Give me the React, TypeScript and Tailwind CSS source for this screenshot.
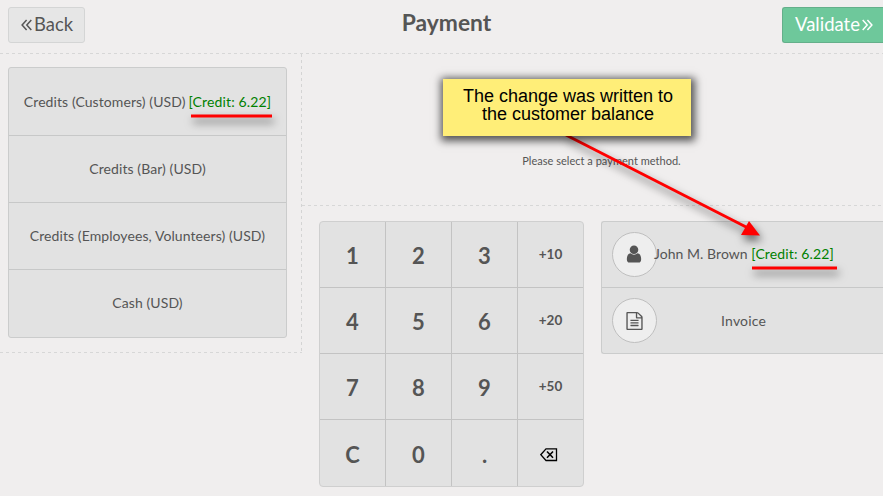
import React from "react";

const paymentMethods = [
  { name: "Credits (Customers) (USD)", credit: "[Credit: 6.22]" },
  { name: "Credits (Bar) (USD)" },
  { name: "Credits (Employees, Volunteers) (USD)" },
  { name: "Cash (USD)" },
];

const keys = ["1", "2", "3", "+10", "4", "5", "6", "+20", "7", "8", "9", "+50", "C", "0", ".", "back"];

function DoubleAngle({ right = false }: { right?: boolean }) {
  return (
    <svg width="11" height="12" viewBox="0 0 11 12" fill="none" stroke="currentColor" strokeWidth="1.5" className={right ? "rotate-180" : ""}>
      <path d="M5.6 .9 1.1 6l4.5 5.1M10.3 .9 5.8 6l4.5 5.1" />
    </svg>
  );
}

function UserIcon() {
  return (
    <svg width="20" height="20" viewBox="0 0 1792 1792" fill="currentColor" className="-mt-0.5 mr-px">
      <path d="M1536 1399q0 109-62.5 187t-150.5 78h-854q-88 0-150.5-78t-62.5-187q0-85 8.5-160.5t31.5-152 58.5-131 94-89 134.5-34.5q131 128 313 128t313-128q76 0 134.5 34.5t94 89 58.5 131 31.5 152 8.5 160.5zm-256-887q0 159-112.5 271.5t-271.5 112.5-271.5-112.5-112.5-271.5 112.5-271.5 271.5-112.5 271.5 112.5 112.5 271.5z" />
    </svg>
  );
}

function InvoiceIcon() {
  return (
    <svg width="19" height="18" viewBox="0 0 1792 1792" preserveAspectRatio="none" fill="currentColor" className="mr-px">
      <path d="M1596 380q28 28 48 76t20 88v1152q0 40-28 68t-68 28h-1344q-40 0-68-28t-28-68v-1600q0-40 28-68t68-28h896q40 0 88 20t76 48zm-444-244v376h376q-10-29-22-41l-313-313q-12-12-41-22zm384 1528v-1024h-416q-40 0-68-28t-28-68v-416h-768v1536h1280zm-1024-864q0-14 9-23t23-9h704q14 0 23 9t9 23v64q0 14-9 23t-23 9h-704q-14 0-23-9t-9-23v-64zm736 224q14 0 23 9t9 23v64q0 14-9 23t-23 9h-704q-14 0-23-9t-9-23v-64q0-14 9-23t23-9h704zm0 256q14 0 23 9t9 23v64q0 14-9 23t-23 9h-704q-14 0-23-9t-9-23v-64q0-14 9-23t23-9h704z" />
    </svg>
  );
}

function BackspaceIcon() {
  return (
    <svg width="18" height="14" viewBox="0 0 18 14" fill="none" stroke="#000" className="mr-[3px]">
      <path d="M6 .9h10.5v11.6H6L.8 6.7z" strokeWidth="1.3" />
      <path d="m7 3.5 6 6.2M13 3.5 7 9.7" strokeWidth="1.6" />
    </svg>
  );
}

function Circle({ children }: { children: React.ReactNode }) {
  return (
    <span className="flex h-[45px] w-[45px] shrink-0 items-center justify-center rounded-full border border-[#bfbfbf] bg-[#eeeeee]">
      {children}
    </span>
  );
}

function HorizontalDash() {
  return <div className="h-px w-full shrink-0 bg-[repeating-linear-gradient(90deg,#d7d7d7_0_3px,transparent_3px_6px)]" />;
}

function VerticalDash() {
  return <div className="w-px shrink-0 bg-[repeating-linear-gradient(180deg,#d4d4d4_0_3px,transparent_3px_6px)]" />;
}

export default function App() {
  return (
    <div className="relative flex h-[496px] w-[883px] flex-col overflow-hidden bg-[#f0eeee] font-['Lato',sans-serif] text-sm text-[#555555]">
      <header className="flex h-[53px] shrink-0 items-start justify-between pl-2 pt-[7px]">
        <button className="flex h-9 w-[77px] items-center gap-[2px] rounded-[3px] border border-[#d4d5d5] bg-[#e6e6e6] pb-px pl-3 text-[18.4px]">
          <DoubleAngle />
          <span>Back</span>
        </button>
        <h1 className="-mt-px ml-[26px] text-[22.8px] leading-8 font-bold">Payment</h1>
        <button className="flex h-9 w-[101px] items-center gap-[2px] rounded-l-[3px] border border-r-0 border-[#64af8a] bg-[#6ec89b] pb-px pl-3 text-[18.5px] text-white">
          <span>Validate</span>
          <DoubleAngle right />
        </button>
      </header>
      <HorizontalDash />
      <main className="flex min-h-0 flex-1">
        <section className="flex h-[299px] w-[302px] shrink-0 flex-col">
          <div className="flex min-h-0 flex-1">
            <div className="flex-1 pl-2 pt-[13px]">
              <div className="grid h-[271px] w-[279px] grid-rows-[68px_67px_67px_1fr] divide-y divide-[#c7c8c8] rounded-[3px] border border-[#cbcccc] bg-[#e2e2e2]">
                {paymentMethods.map((m) => (
                  <div key={m.name} className="flex items-center justify-center gap-[3px] whitespace-nowrap tracking-[0.08px] last:pb-0.5">
                    <span>{m.name}</span>
                    {m.credit && <span className="tracking-[0.14px] text-[#008000]">{m.credit}</span>}
                  </div>
                ))}
              </div>
            </div>
            <VerticalDash />
          </div>
          <HorizontalDash />
        </section>
        <section className="flex min-w-0 flex-1 flex-col">
          <div className="flex h-[151px] items-center justify-center pt-[62px] text-[11px]">
            <p className="mr-[-18px] tracking-[0.02px]">Please select a payment method.</p>
          </div>
          <HorizontalDash />
          <div className="flex gap-[17px] pl-[17px] pt-[15px]">
            <div className="grid h-[266px] w-[265px] shrink-0 grid-cols-[66px_66px_66px_1fr] grid-rows-[66px_66px_66px_1fr] rounded-[4px] border border-[#cfcfcf] bg-[#e2e2e2] font-bold">
              {keys.map((k, i) => (
                <div
                  key={k}
                  className={`flex items-center justify-center border-[#c3c3c3] ${i % 4 < 3 ? "border-r" : ""} ${i < 12 ? "border-b" : ""} ${k.startsWith("+") ? "text-[13.5px]" : i < 12 ? "pt-0.5 text-[22px]" : "pt-[3px] text-[22px]"}`}
                >
                  {k === "back" ? <BackspaceIcon /> : k}
                </div>
              ))}
            </div>
            <div className="grid h-[133px] flex-1 grid-rows-[66px_1fr] rounded-l-[3px] border border-r-0 border-[#cbcccc] bg-[#e2e2e2]">
              <div className="flex items-center border-b border-[#c7c8c8] pl-[10px]">
                <Circle><UserIcon /></Circle>
                <span className="mb-0.5 ml-[-3px] whitespace-nowrap tracking-[0.05px]">John M. Brown <span className="tracking-[0.14px] text-[#008000]">[Credit: 6.22]</span></span>
              </div>
              <div className="flex items-center pl-[10px]">
                <Circle><InvoiceIcon /></Circle>
                <span className="ml-[64px] tracking-[0.2px]">Invoice</span>
              </div>
            </div>
          </div>
        </section>
      </main>
      <svg className="pointer-events-none absolute inset-0 drop-shadow-[2px_5px_4px_rgba(0,0,0,0.6)]" width="883" height="496">
        <path d="M566 135 748 228" stroke="#ff0000" strokeWidth="3" />
        <path d="m760 235.500-19-.5 8-14z" fill="#ff0000" />
        <path d="M191 116h81M752 268h85" stroke="#ff0000" strokeWidth="3" />
      </svg>
      <div className="absolute left-[443px] top-[79px] h-[57px] w-[248px] bg-[#ffee78] pl-0.5 pt-2 text-center font-['Liberation_Sans',Arial,sans-serif] text-[18px] leading-[18px] text-black shadow-[1px_2px_8px_3px_rgba(0,0,0,0.65)]">
        The change was written to<br />the customer balance
      </div>
    </div>
  );
}
